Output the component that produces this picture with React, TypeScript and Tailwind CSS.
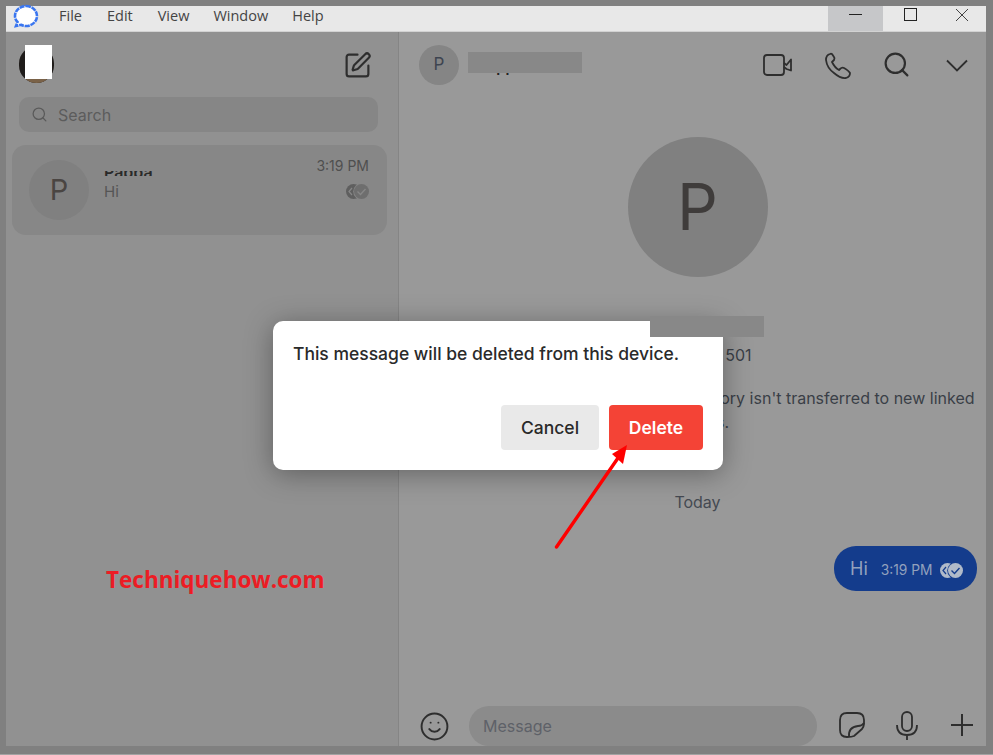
import React from 'react';
import { Search, SquarePen, Smile } from 'lucide-react';

const inter = { fontFamily: 'Inter, "Liberation Sans", sans-serif' };

function DoubleCheck({ back, front, tick }: { back: string; front: string; tick: string }) {
  return (
    <svg width="23" height="15" viewBox="0 0 23 15">
      <circle cx="7.5" cy="7.5" r="7.5" fill={back} />
      <path d="M6 4 L3 7.5 L6 11" fill="none" stroke={tick} strokeWidth="1.2" />
      <circle cx="15.5" cy="7.5" r="8.3" fill={tick} />
      <circle cx="15.5" cy="7.5" r="7.5" fill={front} />
      <path d="M11.5 7.5 L14.5 10.5 L19.5 5" fill="none" stroke={tick} strokeWidth="1.4" />
    </svg>
  );
}

function SignalLogo() {
  return (
    <svg width="26" height="24" viewBox="0 0 26 24">
      <path d="M13 2 C19 2 24 6.500 24 12 C24 17.500 19 22 13 22 C11 22 9.500 21.500 8 20.800 L3 22 L4.500 18 C3 16.500 2 14.300 2 12 C2 6.500 7 2 13 2 Z" fill="#fff" stroke="#3a76f0" strokeWidth="2.600" strokeDasharray="5 0.800" />
    </svg>
  );
}

export default function App() {
  return (
    <div className="w-[993px] h-[755px] bg-[#a3a3a3] overflow-hidden" style={inter}>
      <div className="h-[754px] bg-[#808080] pl-[6px] pt-[6px]">
        <div className="relative w-[980px] h-[740px] flex flex-col">
          {/* title bar */}
          <div className="h-[26px] bg-[#e8e8e8] border-b border-[#d2d2d2] flex items-center text-[14.500px] text-[#444] relative" style={{ fontFamily: '"Open Sans", sans-serif' }}>
            <div className="absolute left-[7px] -top-[2px]"><SignalLogo /></div>
            <span className="ml-[53px] -mt-[6px]">File</span>
            <span className="ml-[25px] -mt-[6px]">Edit</span>
            <span className="ml-[25px] -mt-[6px]">View</span>
            <span className="ml-[24px] -mt-[6px]">Window</span>
            <span className="ml-[24px] -mt-[6px]">Help</span>
            <div className="ml-auto flex h-[25px]">
              <div className="w-[55px] bg-[#c6c7c9] flex items-center justify-center">
                <div className="w-[13px] h-px bg-[#222] -mt-[8px]" />
              </div>
              <div className="w-[54px] flex justify-center pt-[2px]">
                <div className="w-[13px] h-[13px] border border-[#222]" />
              </div>
              <div className="w-[49px] flex justify-center pt-[2px]">
                <svg width="14" height="14" viewBox="0 0 14 14"><path d="M1 1 L13 13 M13 1 L1 13" stroke="#444" strokeWidth="1" /></svg>
              </div>
            </div>
          </div>

          <div className="flex flex-1 min-h-0">
            {/* sidebar */}
            <div className="w-[393px] bg-[#919191] border-r border-[#858585] flex flex-col shrink-0">
              <div className="h-[65px] flex items-start pl-[13px] pr-[26px] justify-between">
                <div className="relative mt-[14px] w-[35px] h-[37px] rounded-full bg-[#1f1c1a] overflow-hidden">
                  <div className="absolute left-0 bottom-0 w-full h-[4px] bg-[#7a6248]" />
                </div>
                <SquarePen className="mt-[19px]" size={29} strokeWidth={1.800} color="#2e2e2e" />
              </div>
              <div className="ml-[13px] w-[359px] h-[35px] rounded-[10px] bg-[#868686] flex items-center pl-[12px] text-[16px] text-[#5c5c5c]">
                <Search size={17} strokeWidth={1.800} color="#5a5a5a" />
                <span className="ml-[10px]">Search</span>
              </div>
              <div className="mx-[6px] mt-[13px] w-[375px] h-[90px] rounded-[14px] bg-[#878787] flex items-center pl-[17px] pr-[18px]">
                <div className="w-[60px] h-[60px] rounded-full bg-[#808080] flex items-center justify-center text-[29px] text-[#4a4542]">P</div>
                <div className="ml-[15px] flex-1 self-start pt-[26px]">
                  <div className="h-[5px] overflow-hidden text-[16px] font-semibold leading-[20px] text-[#2a2a2a]">
                    <div className="-mt-[9px]">Pappa</div>
                  </div>
                  <div className="mt-[6px] text-[15px] leading-[20px] text-[#555]">Hi</div>
                </div>
                <div className="self-start pt-[12px] flex flex-col items-end">
                  <div className="text-[14px] leading-[18px] text-[#4f4f4f]">3:19 PM</div>
                  <div className="mt-[9px]"><DoubleCheck back="#5f5f5f" front="#6e6e6e" tick="#878787" /></div>
                </div>
              </div>
            </div>

            {/* conversation */}
            <div className="flex-1 bg-[#999] flex flex-col relative">
              <div className="h-[66px] shrink-0 flex items-start">
                <div className="ml-[20px] mt-[13px] w-[40px] h-[40px] rounded-full bg-[#858585] flex items-center justify-center text-[17px] text-[#3d4450]">P</div>
                <div className="ml-[19px] mt-[25px] text-[15px] font-semibold leading-[20px] text-[#222]">Pappa</div>
                <div className="ml-auto flex items-start">
                  <svg className="mt-[20px]" width="30" height="26" viewBox="0 0 30 26" fill="none" stroke="#2e2e2e" strokeWidth="1.800" strokeLinejoin="round">
                    <rect x="1" y="3" width="20" height="20" rx="3" />
                    <path d="M21 11 L23.500 13 L28 7.500 V18.500 L23.500 17 L21 15" />
                  </svg>
                  <svg className="ml-[31px] mt-[20px]" width="28" height="28" viewBox="0 0 28 28" fill="none" stroke="#2e2e2e" strokeWidth="1.800" strokeLinejoin="round">
                    <path d="M6 2 Q2 3 2 8 Q3 16 10 21 Q17 27 22 26 Q26 25 26 21 Q25 19 20 16 Q18 15 16 17 L15 18 Q11 16 8 10 L10 8 Q11 6 10 5 L8 2 Q7 1.500 6 2 Z" />
                  </svg>
                  <Search className="ml-[30px] mt-[18px]" size={29} strokeWidth={1.800} color="#2e2e2e" />
                  <svg className="ml-[35px] mr-[18px] mt-[27px]" width="22" height="13" viewBox="0 0 22 13" fill="none" stroke="#2e2e2e" strokeWidth="1.800"><path d="M1 1.500 L11 11.500 L21 1.500" /></svg>
                </div>
              </div>
              <div className="absolute left-[69px] top-[20px] w-[114px] h-[21px] bg-[#888]" />

              <div className="flex-1 min-h-0 flex flex-col">
                <div className="self-center ml-[10px] w-[554px] flex flex-col items-center text-[#3a3f47]">
                  <div className="mt-[39px] w-[140px] h-[140px] rounded-full bg-[#808080] flex items-center justify-center text-[64px] text-[#3f3c3b]">P</div>
                  <div className="mt-[38px] h-[24px] text-[18px] font-semibold leading-[24px] text-[#222]">Pappa</div>
                  <div className="mt-[6px] w-[108px] text-right text-[16px] leading-[20px]">501</div>
                  <div className="mt-[21px] w-full text-[16px] leading-[24px]">
                    <div className="text-right">Message history isn't transferred to new linked</div>
                    <div className="text-center">devices.</div>
                  </div>
                  <div className="mt-[58px] text-[16px] leading-[20px] text-[#454a52]">Today</div>
                </div>
                <div className="self-end mr-[9px] mt-[34px] w-[143px] h-[45px] rounded-[22px] bg-[#143c8c] flex items-center pl-[16px] text-[#92a1bd]">
                  <span className="text-[18px]">Hi</span>
                  <span className="ml-[13px] text-[13.800px] mt-[3px]">3:19 PM</span>
                  <span className="ml-[7px] mt-[3px]"><DoubleCheck back="#b0bac9" front="#b0bac9" tick="#143c8c" /></span>
                </div>
              </div>

              <div className="h-[40px] shrink-0 flex items-start">
                <Smile className="ml-[20px] mt-[5px]" size={31} strokeWidth={1.500} color="#2e2e2e" />
                <div className="ml-[19px] w-[348px] h-[40px] rounded-[20px] bg-[#8b8b8b] flex items-center pl-[14px] text-[16px] text-[#5e6168]">Message</div>
                <svg className="ml-[22px] mt-[6px]" width="26" height="26" viewBox="0 0 26 26" fill="none" stroke="#2e2e2e" strokeWidth="1.800" strokeLinejoin="round">
                  <path d="M8 25 Q1 25 1 18 V8 Q1 1 8 1 H18 Q25 1 25 8 V12 Q25 14 23 17 L15 24 Q13 25 8 25 Z" />
                  <path d="M10 25 Q9 15 19 14 Q23 14 25 11" />
                </svg>
                <svg className="ml-[31px] mt-[5px]" width="22" height="30" viewBox="0 0 22 30" fill="none" stroke="#2e2e2e" strokeWidth="1.800">
                  <rect x="6" y="1" width="10" height="19" rx="5" />
                  <path d="M1 14 Q1 24 11 24 Q21 24 21 14 M11 24 V29" />
                </svg>
                <svg className="ml-[32px] mt-[7px]" width="24" height="24" viewBox="0 0 24 24" fill="none" stroke="#2e2e2e" strokeWidth="2">
                  <path d="M12 1 V23 M1 12 H23" />
                </svg>
              </div>
            </div>
          </div>

          {/* redaction over the profile photo */}
          <div className="absolute left-[19px] top-[39px] w-[27px] h-[34px] bg-white" />

          {/* watermark */}
          <div className="absolute left-[100px] top-[559px] text-[22.500px] font-bold leading-[30px] text-[#ec1c24]" style={{ fontFamily: '"Open Sans", sans-serif' }}>Techniquehow.com</div>

          {/* dialog */}
          <div className="absolute left-[267px] top-[315px] w-[450px] h-[149px] rounded-[10px] bg-white shadow-[0_4px_28px_rgba(0,0,0,0.35)] px-[20px] flex flex-col">
            <div className="mt-[22px] text-[17.500px] font-medium leading-[22px] whitespace-nowrap text-[#2a2a2a]">This message will be deleted from this device.</div>
            <div className="mt-[40px] flex justify-end gap-[10px]">
              <button className="w-[98px] h-[45px] rounded-[4px] bg-[#e9e9e9] pt-[1px] text-[17.500px] font-medium text-[#2a2a2a]">Cancel</button>
              <button className="w-[94px] h-[45px] rounded-[4px] bg-[#f44336] pt-[1px] text-[17.500px] font-semibold text-white">Delete</button>
            </div>
          </div>
          <div className="absolute left-[644px] top-[310px] w-[114px] h-[21px] bg-[#888]" />

          {/* red annotation arrow */}
          <svg className="absolute left-[540px] top-[430px]" width="100" height="120" viewBox="0 0 100 120">
            <path d="M10.500 111 L72 22" stroke="#ff0000" strokeWidth="3.400" strokeLinecap="round" />
            <path d="M81 9 L77 28 L66 18 Z" fill="#ff0000" />
          </svg>
        </div>
      </div>
    </div>
  );
}
